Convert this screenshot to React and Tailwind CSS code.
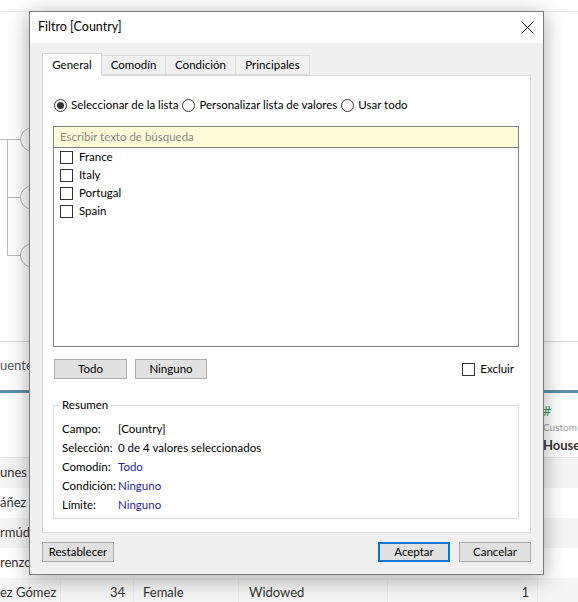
import React from "react";

const FONT = { fontFamily: 'Lato, "Noto Sans", sans-serif' };

function Checkbox() {
  return <span className="block w-[13px] h-[13px] border border-[#333] bg-white shrink-0" />;
}

function Radio({ checked }) {
  return (
    <span className="flex items-center justify-center w-[13px] h-[13px] rounded-full border border-[#333] bg-white shrink-0">
      {checked && <span className="block w-[7px] h-[7px] rounded-full bg-[#333]" />}
    </span>
  );
}

function Button({ children, primary, className = "" }) {
  return (
    <div
      className={
        "flex items-center justify-center h-[20px] w-[72px] text-[11.5px] text-black bg-[#e1e1e1] " +
        (primary ? "border-2 border-[#0078d7] " : "border border-[#adadad] ") +
        className
      }
    >
      {children}
    </div>
  );
}

const countries = ["France", "Italy", "Portugal", "Spain"];

const summary = [
  { label: "Campo:", value: "[Country]" },
  { label: "Selección:", value: "0 de 4 valores seleccionados" },
  { label: "Comodín:", value: "Todo", link: true },
  { label: "Condición:", value: "Ninguno", link: true },
  { label: "Límite:", value: "Ninguno", link: true },
];

const rows = [
  { name: "unes I", bg: "bg-[#f5f5f5]" },
  { name: "áñez", bg: "bg-white" },
  { name: "rmúd", bg: "bg-[#f5f5f5]" },
  { name: "renzo", bg: "bg-white" },
];

function TreeLines() {
  // conector del árbol a la izquierda (dibujo)
  return (
    <svg width="40" height="329" className="block">
      <g stroke="#b9b9b9" strokeWidth="1" fill="none">
        <line x1="0" y1="127.5" x2="21" y2="127.5" />
        <line x1="7.5" y1="127.5" x2="7.5" y2="243.5" />
        <line x1="7.5" y1="185.5" x2="21" y2="185.5" />
        <line x1="7.5" y1="243.5" x2="21" y2="243.5" />
        <circle cx="32" cy="127.5" r="11.5" />
        <circle cx="32" cy="185.5" r="11.5" />
        <circle cx="32" cy="243.5" r="11.5" />
      </g>
    </svg>
  );
}

export default function App() {
  return (
    <div className="relative w-[578px] h-[602px] overflow-hidden bg-white text-[#333]" style={FONT}>
      {/* Fondo */}
      <div className="h-[12px] border-b border-[#e6e6e6]" />
      <div className="h-[329px]">
        <TreeLines />
      </div>
      <div className="h-[49px] border-t border-[#d6d6d6] flex items-center">
        <span className="text-[13px] text-[#555]">uente</span>
      </div>
      <div className="h-[3px] bg-[#5f8ea6]" />
      <div className="h-[65px] flex border-b border-[#e4e4e4]">
        <div className="flex-1" />
        <div className="w-[35px] pt-[10px] flex flex-col whitespace-nowrap">
          <span className="text-[14px] leading-[16px] text-[#3d9a6c]">#</span>
          <span className="text-[10px] leading-[17px] text-[#a0a0a0]">Custom</span>
          <span className="text-[13px] leading-[18px] font-bold text-[#333]">House</span>
        </div>
      </div>
      {rows.map((r) => (
        <div key={r.name} className={"h-[30px] flex items-center text-[13px] " + r.bg}>
          <span>{r.name}</span>
        </div>
      ))}
      <div className="h-[30px] flex items-center text-[13px] bg-[#f5f5f5]">
        <div className="w-[60px] whitespace-nowrap">ez Gómez</div>
        <div className="w-[73px] h-full border-l border-[#ececec] flex items-center justify-end pr-[8px]">34</div>
        <div className="w-[105px] h-full border-l border-[#ececec] flex items-center pl-[9px]">Female</div>
        <div className="w-[149px] h-full border-l border-[#ececec] flex items-center pl-[10px]">Widowed</div>
        <div className="w-[150px] h-full border-l border-[#ececec] flex items-center justify-end pr-[8px]">1</div>
        <div className="flex-1 h-full border-l border-[#ececec]" />
      </div>

      {/* Diálogo */}
      <div className="absolute left-[29px] top-[11px] w-[515px] h-[564px] border border-[#7d7d7d] bg-[#f0f0f0] flex flex-col shadow-[0_4px_20px_rgba(0,0,0,0.35)]">
        <div className="h-[31px] bg-white flex items-center justify-between pl-[8px] pr-[9px]">
          <span className="text-[12.5px] text-black">Filtro [Country]</span>
          <svg width="13" height="13" viewBox="0 0 13 13">
            <path d="M0.5 0.5 L12.5 12.5 M12.5 0.5 L0.5 12.5" stroke="#111" strokeWidth="1" />
          </svg>
        </div>

        <div className="flex-1 flex flex-col px-[12px] pt-[10px] text-[11.5px] text-black">
          {/* Pestañas */}
          <div className="flex items-end h-[22px]">
            <div className="relative z-10 -mb-px h-[23px] w-[60px] bg-white border border-b-0 border-[#d9d9d9] flex items-center justify-center">
              General
            </div>
            <div className="h-[20px] w-[64px] border border-l-0 border-[#d9d9d9] flex items-center justify-center">
              Comodín
            </div>
            <div className="h-[20px] w-[70px] border border-l-0 border-[#d9d9d9] flex items-center justify-center">
              Condición
            </div>
            <div className="h-[20px] w-[74px] border border-l-0 border-[#d9d9d9] flex items-center justify-center">
              Principales
            </div>
          </div>

          {/* Panel */}
          <div className="h-[458px] bg-white border border-[#d9d9d9] pt-[22px] pl-[10px] pr-[11px] flex flex-col">
            <div className="h-[14px] flex items-center gap-[4px] pl-[1px] whitespace-nowrap">
              <Radio checked />
              <span>Seleccionar de la lista</span>
              <Radio />
              <span>Personalizar lista de valores</span>
              <Radio />
              <span>Usar todo</span>
            </div>

            <div className="mt-[14px] h-[22px] border border-[#828282] bg-[#fffbd8] flex items-center pl-[6px] text-[#8a8a8a]">
              Escribir texto de búsqueda
            </div>
            <div className="h-[199px] border border-t-0 border-[#828282] pl-[6px] flex flex-col">
              {countries.map((c) => (
                <div key={c} className="h-[18px] flex items-center gap-[6px]">
                  <Checkbox />
                  <span>{c}</span>
                </div>
              ))}
            </div>

            <div className="mt-[12px] flex items-center">
              <Button className="w-[73px] ml-[1px]">Todo</Button>
              <Button className="ml-[8px]">Ninguno</Button>
              <div className="flex-1" />
              <div className="flex items-center gap-[5px] pr-[5px]">
                <Checkbox />
                <span>Excluir</span>
              </div>
            </div>

            <div className="relative mt-[26px] border border-[#dcdcdc] pt-[13px] pb-[4px] pl-[8px]">
              <span className="absolute -top-[9px] left-[5px] bg-white px-[3px] leading-[16px]">Resumen</span>
              {summary.map((s) => (
                <div key={s.label} className="h-[19px] flex items-center">
                  <span className="w-[56px]">{s.label}</span>
                  <span className={s.link ? "text-[#1f1fa3]" : ""}>{s.value}</span>
                </div>
              ))}
            </div>
          </div>

          {/* Botones inferiores */}
          <div className="mt-[9px] flex items-center">
            <Button>Restablecer</Button>
            <div className="flex-1" />
            <Button primary>Aceptar</Button>
            <Button className="ml-[9px]">Cancelar</Button>
          </div>
        </div>
      </div>
    </div>
  );
}
